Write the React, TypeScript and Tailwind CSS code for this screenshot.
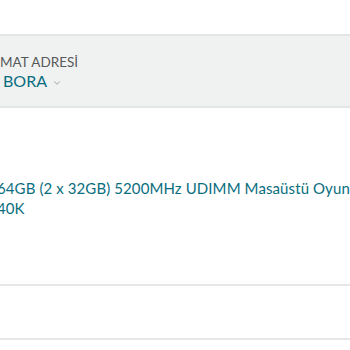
import { ChevronDown } from "lucide-react";

export default function App() {
	return (
		<div className="w-[350px] h-[350px] overflow-hidden bg-white font-['Lato',sans-serif]">
			{/* address band */}
			<div className="mt-[34px] h-[74px] border-y-2 border-[#e3e6e6] bg-[#f0f2f2] pt-[18px]">
				<div className="text-[13.5px] leading-[16px] text-[#565959]">MAT ADRESİ</div>
				<div className="flex items-center gap-[5px] ml-[3px] mt-[1px]">
					<span className="text-[16px] leading-[20px] text-[#0a6e80]">BORA</span>
					<ChevronDown className="w-[10px] h-[10px] text-[#8d9096] mt-[3px]" strokeWidth={2} />
				</div>
			</div>

			{/* product title */}
			<div className="mt-[70px] -ml-[3px] text-[15px] leading-[20px] text-[#0a6e80] whitespace-nowrap tracking-[0.1px]">
				<div>64GB (2 x 32GB) 5200MHz UDIMM Masaüstü Oyun</div>
				<div>40K</div>
			</div>

			{/* empty rows */}
			<div className="mt-[66px] h-[2px] bg-[#e6e8e8] shadow-[0_-3px_3px_rgba(0,0,0,0.02)]" />
			<div className="mt-[52px] h-[2px] bg-[#e6e8e8]" />
		</div>
	);
}
